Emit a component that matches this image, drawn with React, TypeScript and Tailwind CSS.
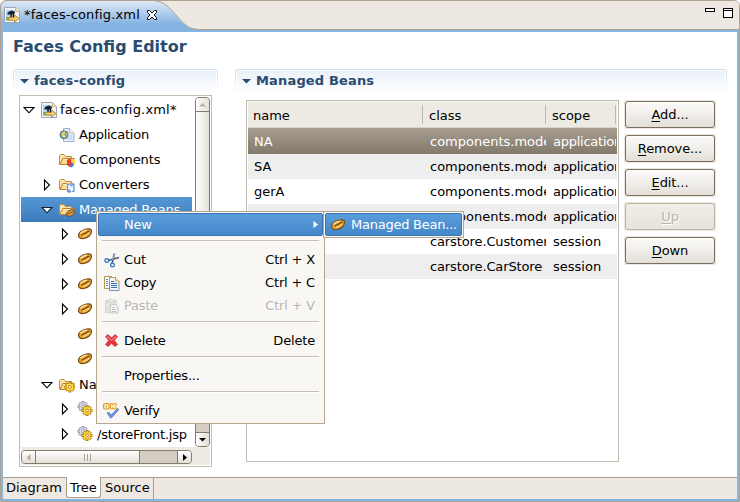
import React from "react";

const Bean = () => (
  <svg width="16" height="16" viewBox="0 0 16 16" className="shrink-0">
    <path d="M1.500 9.500C1.500 6.500 5 4 9.500 3c3-.5 5 .2 5 2.300 0 3.700-3.500 6.600-8 7.200-2.800.3-5-.5-5-3z" fill="#e5a535" stroke="#7a450f" strokeWidth="1.200" />
    <path d="M3.500 7.200C5 5.500 7.500 4.500 10 4.300" stroke="#ffe39a" strokeWidth="1.500" fill="none" />
    <path d="M4.500 9.500C6 7.500 8 8 9.500 6.500s1.500-1 3-1.200" stroke="#7a430d" strokeWidth="1.200" fill="none" />
    <path d="M6 10.500c2.500-.3 4.500-1.500 6.300-3.500" stroke="#fbd069" strokeWidth="1.400" fill="none" />
  </svg>
);

const XmlPage = () => (
  <svg width="16" height="16" viewBox="0 0 16 16" className="shrink-0">
    <path d="M.5.5h11l4 4v11H.5z" fill="#f2f6fb" stroke="#98a6b4" />
    <path d="M11.500.5v4h4" fill="#f4e5b0" stroke="#d9bd74" />
    <rect x="2" y="3" width="9" height="10.500" fill="#b4d4ee" />
    <path d="M2 10h4l3 3.500H2z" fill="#83b168" />
    <path d="M3.500 6 5 4.500 8 3.500 11 5v1.500h-1V10H8.700V7.500h-.9V11H6.300V7.500H3.500z" fill="#17202b" />
    <path d="M4.500 10.500h6V8l4.500 3.500-4.500 3.500v-2h-6z" fill="#f6d27a" stroke="#b88422" strokeWidth=".9" />
  </svg>
);

const AppIcon = () => (
  <svg width="16" height="16" viewBox="0 0 16 16" className="shrink-0">
    <path d="M4.500 1.500h6l4.500 4.500v8.500H4.500z" fill="#e8f0fb" stroke="#a0afcb" />
    <path d="M10.500 1.500V6H15" fill="#fff" stroke="#cdb170" />
    <path d="M10 8h3.500v5H8z" fill="#cadcf5" />
    <circle cx="5" cy="7.800" r="4" fill="#6d9fd2" stroke="#456f9d" />
    <path d="M2.500 6l3-2 1 2-1.500 1.500 2 2L5.500 11 3 9.500zM7.500 5l1 2.500-1 1z" fill="#f1d34d" />
  </svg>
);

const Folder = ({ children }: { children?: React.ReactNode }) => (
  <svg width="16" height="16" viewBox="0 0 16 16" className="shrink-0">
    <path d="M.5 12.500v-9l1-1h3.500l1.500 2h6v2.500" fill="#fae3ae" stroke="#c58d3c" />
    <path d="M1 12.500 3.800 6.500h11.500l-2.800 6z" fill="#fbdc91" stroke="#bd8230" />
    <path d="M4.500 7.500h9" stroke="#fff1c7" />
    {children}
  </svg>
);

const teeth = [0, 45, 90, 135, 180, 225, 270, 315];

const Gear = ({ x, y, gray }: { x: number; y: number; gray?: boolean }) => {
  const edge = gray ? "#8f97ab" : "#b57a0c";
  const body = gray ? "#d3d9e5" : "#ffdc42";
  return (
    <g transform={`translate(${x} ${y})`}>
      {teeth.map((a) => (
        <rect key={a} x="-1" y="-5" width="2" height="3" fill={body} stroke={edge} strokeWidth=".9" transform={`rotate(${a})`} />
      ))}
      <circle r="3.200" fill={body} />
      <circle r="1.500" fill="#fff" stroke={edge} strokeWidth=".9" />
    </g>
  );
};

const Gears = () => (
  <svg width="16" height="16" viewBox="0 0 16 16" className="shrink-0">
    <Gear x={6} y={5.500} gray />
    <Gear x={10} y={9.500} />
  </svg>
);

const icons: Record<string, React.ReactNode> = {
  xml: <XmlPage />,
  app: <AppIcon />,
  comp: (
    <Folder>
      <path d="M8 8l2.500-1.500L13 8v3l-2.500 1.500L8 11z" fill="#ee3b30" />
      <path d="M12 8.500l2-1 2 1V12l-2 1-2-1z" fill="#ffd52e" />
      <path d="M9.500 11.500l2.500-1.500 2.500 1.500v2.500L12 15.500 9.500 14z" fill="#4474da" />
      <path d="M8 10.500l2.500-1 1.500 1.500v2.500l-1.500 1L8 13z" fill="#ee3b30" />
    </Folder>
  ),
  conv: (
    <Folder>
      <path d="M7.500 6.500h8.500v9H7.500z" fill="#eef3fc" />
      <path d="M10.500 14.500h-2v-7h2M13 7.500h2v7h-2M9.500 12.500l2 2-2 1.500M13.500 6l-2 1.500 2 2" stroke="#6f93d2" strokeWidth="1.200" fill="none" />
    </Folder>
  ),
  beans: (
    <Folder>
      <g transform="translate(6.500 6) scale(.62)">
        <path d="M1.500 10.200C1.200 6.600 5 3.600 9.500 2.800c3-.5 5.200.3 5.300 2.500C15 9.300 11 12.800 6.500 13.300c-2.800.3-4.900-.8-5-3.100z" fill="#d9a044" stroke="#6f3d0c" strokeWidth="1.500" />
        <path d="M3.500 10.500C6 7 9 9 13 5" stroke="#6f3d0c" strokeWidth="1.500" fill="none" />
      </g>
    </Folder>
  ),
  nav: (
    <Folder>
      <Gear x={10.800} y={10} />
    </Folder>
  ),
  bean: <Bean />,
  gears: <Gears />,
};

const Expander = ({ open, inverse }: { open: boolean; inverse?: boolean }) => (
  <svg width="12" height="12" viewBox="0 0 12 12" className="shrink-0">
    <path
      d={open ? "M1 3.500h10L6 8.800z" : "M3.500 1v10L8.500 6z"}
      fill="#fff"
      stroke={inverse ? "#10243a" : "#000"}
      strokeWidth="1.100"
    />
  </svg>
);

type Node = { level: number; open?: boolean; icon: string; label: string; tracking?: string; selected?: boolean };

const nodes: Node[] = [
  { level: 0, open: true, icon: "xml", label: "faces-config.xml*", tracking: "tracking-[0.18px]" },
  { level: 1, icon: "app", label: "Application", tracking: "tracking-[-0.25px]" },
  { level: 1, icon: "comp", label: "Components", tracking: "tracking-[-0.08px]" },
  { level: 1, open: false, icon: "conv", label: "Converters", tracking: "tracking-[-0.1px]" },
  { level: 1, open: true, icon: "beans", label: "Managed Beans", tracking: "tracking-[-0.23px]", selected: true },
  { level: 2, open: false, icon: "bean", label: "NA" },
  { level: 2, open: false, icon: "bean", label: "SA" },
  { level: 2, open: false, icon: "bean", label: "gerA" },
  { level: 2, open: false, icon: "bean", label: "" },
  { level: 2, icon: "bean", label: "" },
  { level: 2, icon: "bean", label: "" },
  { level: 1, open: true, icon: "nav", label: "Na" },
  { level: 2, open: false, icon: "gears", label: "" },
  { level: 2, open: false, icon: "gears", label: "/storeFront.jsp", tracking: "tracking-[-0.2px]" },
];

const indents = ["pl-[2px]", "pl-[20px]", "pl-[38px]"];

const TreeRow = ({ node }: { node: Node }) => (
  <div
    className={`flex h-[25px] items-center whitespace-nowrap ${indents[node.level]} ${
      node.selected ? "bg-linear-to-b from-[#5597d5] to-[#3d7cbc] text-white" : ""
    }`}
  >
    <div className={`w-[12px] shrink-0 ${node.level === 2 ? "pb-[2px]" : ""}`}>
      {node.open !== undefined && <Expander open={node.open} inverse={node.selected} />}
    </div>
    <div className={`ml-[6px] ${node.level === 0 ? "mr-[3px]" : "mr-[4px]"} ${node.level === 2 ? "pb-[2px]" : ""}`}>
      {icons[node.icon]}
    </div>
    <span className={node.tracking}>{node.label}</span>
  </div>
);

const SectionHeader = ({ title }: { title: string }) => (
  <div className="h-[25px] rounded-t-[3px] bg-linear-to-b from-[#c9deef] to-white px-px pt-px">
    <div className="flex h-[24px] items-start rounded-t-[2px] border-x border-t border-white bg-linear-to-b from-[#ebf1f9] to-white pl-[5px]">
      <svg width="10" height="6" viewBox="0 0 10 6" className="mr-[4px] mt-[7px]">
        <path d="M0 1h9L4.500 5.500z" fill="#294c70" />
      </svg>
      <h2 className="text-[13px] font-bold leading-[20px] tracking-[0.16px] text-[#294c70]">{title}</h2>
    </div>
  </div>
);

const Arrow = ({ d, color = "#000" }: { d: string; color?: string }) => (
  <svg width="7" height="7" viewBox="0 0 7 7">
    <path d={d} fill={color} />
  </svg>
);

const TreePanel = () => (
  <div className="ml-[6px] mt-[1px] flex h-[372px] w-[193px] flex-col border border-[#c0beb0] bg-white p-px">
    <div className="flex h-[350px]">
      <div className="w-[171px] overflow-hidden">
        {nodes.map((n, i) => (
          <TreeRow key={i} node={n} />
        ))}
      </div>
      <div className="w-[3px] bg-white" />
      <div className="flex flex-1 flex-col overflow-hidden rounded-[4px] border border-[#857b6d] bg-[#d6cdc2]">
        <div className="flex h-[14px] items-center justify-center border-b border-[#857b6d] bg-linear-to-r from-white to-[#e4dfd8]">
          <Arrow d="M0 5.500h7L3.500 2z" color="#b7afa5" />
        </div>
        <div className="h-[300px] border-b border-[#857b6d] bg-linear-to-r from-white to-[#e4dfd8]" />
        <div className="flex-1" />
        <div className="flex h-[14px] items-center justify-center border-t border-[#857b6d] bg-linear-to-r from-white to-[#e4dfd8]">
          <Arrow d="M0 2h7L3.500 5.500z" />
        </div>
      </div>
    </div>
    <div className="flex flex-1 bg-[#eeebe5] pb-px pt-[3px]">
      <div className="flex w-[171px] overflow-hidden rounded-[4px] border border-[#857b6d] bg-[#d6cdc2]">
        <div className="flex w-[14px] items-center justify-center border-r border-[#857b6d] bg-linear-to-b from-white to-[#e4dfd8]">
          <Arrow d="M5.500 0v7L1.500 3.500z" color="#b7afa5" />
        </div>
        <div className="flex w-[104px] items-center justify-center gap-[2px] border-r border-[#857b6d] bg-linear-to-b from-white to-[#e4dfd8]">
          <i className="h-[7px] w-px bg-[#aaa296]" />
          <i className="h-[7px] w-px bg-[#aaa296]" />
          <i className="h-[7px] w-px bg-[#aaa296]" />
        </div>
        <div className="flex-1" />
        <div className="flex w-[14px] items-center justify-center border-l border-[#857b6d] bg-linear-to-b from-white to-[#e4dfd8]">
          <Arrow d="M2 0v7L6 3.500z" />
        </div>
      </div>
    </div>
  </div>
);

const beans = [
  ["NA", "components.model", "application"],
  ["SA", "components.model", "application"],
  ["gerA", "components.model", "application"],
  ["", "components.model", "application"],
  ["", "carstore.Customer", "session"],
  ["", "carstore.CarStore", "session"],
];

const BeanTable = () => (
  <div className="h-[362px] w-[373px] border border-[#c0beb0] bg-white">
    <div className="ml-px mr-px">
      <div className="flex h-[27px] border-b border-t border-b-[#d8d3ca] border-t-[#f6f4f1] bg-[#edeae3] py-[3px] leading-[22px]">
        <div className="w-[175px] border-r border-[#bdb8af] pl-[5px]">name</div>
        <div className="w-[123px] border-r border-[#bdb8af] pl-[6px]">class</div>
        <div className="w-[70px] border-r border-[#bdb8af] pl-[6px]">scope</div>
      </div>
      {beans.map((row, i) => (
        <div
          key={i}
          className={`flex whitespace-nowrap ${
            i === 0
              ? "h-[26px] bg-linear-to-b from-[#a69d90] to-[#847a6c] leading-[27px] text-white"
              : i % 2
                ? "h-[25px] bg-[#eeeeee] leading-[25px]"
                : "h-[25px] leading-[25px]"
          }`}
        >
          <div className="w-[175px] overflow-hidden pl-[6px]">{row[0]}</div>
          <div className={`w-[123px] overflow-hidden pl-[7px] ${i > 3 ? "tracking-[-0.12px]" : ""}`}>{row[1]}</div>
          <div className={`w-[70px] overflow-hidden pl-[7px] ${i > 3 ? "" : "tracking-[-0.25px]"}`}>{row[2]}</div>
        </div>
      ))}
    </div>
  </div>
);

const SideButton = ({ hot, rest, disabled }: { hot: string; rest: string; disabled?: boolean }) => (
  <div className="h-[29px] rounded-[2px] bg-[#ece8df] p-px">
    <button
      disabled={disabled}
      className={`block h-[27px] w-full rounded-[3px] border bg-linear-to-b text-center leading-[24px] tracking-[-0.1px] ${
        disabled
          ? "border-[#beb3a0] from-[#f0ede7] to-[#e8e3dc] text-[#bab5ac] [text-shadow:1px_1px_0_#fff]"
          : "border-[#7b705f] from-[#fbfaf9] via-[#f0eeea] to-[#e3dfd8] text-black shadow-[inset_0_1px_0_#fff]"
      }`}
    >
      <span className="underline underline-offset-2">{hot}</span>
      {rest}
    </button>
  </div>
);

const Cut = () => (
  <svg width="16" height="16" viewBox="0 0 16 16">
    <path d="M10.500 1.500 8 11.500M15 5.500 4 8.500" stroke="#465a7c" strokeWidth="1.600" />
    <path d="M11.200 2 8.500 8" stroke="#a9bdd7" />
    <circle cx="2.800" cy="8.500" r="1.900" fill="#e4f1fd" stroke="#2d75b5" strokeWidth="1.200" />
    <circle cx="8.500" cy="13" r="1.900" fill="#e4f1fd" stroke="#2d75b5" strokeWidth="1.200" />
  </svg>
);

const Copy = () => (
  <svg width="16" height="16" viewBox="0 0 16 16">
    <path d="M.5 1.500h7l2 2v10h-9z" fill="#f4f8ff" stroke="#b69d55" />
    <path d="M2 4.500h2M2 6.500h2M2 8.500h2M2 10.500h2" stroke="#6288bd" />
    <path d="M5.500 2.500h6l3.500 3.500v9.500H5.500z" fill="#eef5ff" stroke="#8090a3" />
    <path d="M5.500 7V2.500h6L15 6" fill="none" stroke="#c1a347" />
    <path d="M11.500 2.500V6H15" fill="#fff2b6" stroke="#c1a347" />
    <path d="M7 6.500h3M7 8.500h6M7 10.500h6M7 12.500h6" stroke="#3d69a8" />
  </svg>
);

const Paste = () => (
  <svg width="16" height="16" viewBox="0 0 16 16">
    <path d="M1.500 2.500h11v12h-11z" fill="#e4e2de" stroke="#d8d6d2" />
    <path d="M4 4V2h2l1-1.500L8.500 2h2v2z" fill="#f3f2ef" stroke="#cfcdc9" />
    <path d="M6.500 6.500h5l2.500 2.500v6H6.500z" fill="#f5f4f2" stroke="#c8c6c2" />
    <path d="M8 9.500h3M8 11.500h4M8 13.500h4" stroke="#c8c6c2" />
  </svg>
);

const Delete = () => (
  <svg width="16" height="16" viewBox="0 0 16 16">
    <path d="M1.500 3.500 4 1.500 7.500 5 11 1.500 13.500 3.500 10.300 7.500 13.500 11.500 11 13.500 7.500 10.300 4 13.500 1.500 11.500 4.700 7.500z" fill="#e92c3c" stroke="#cf5358" />
    <path d="M3 3.500 7.500 7.500 12 3.500" stroke="#f47e80" strokeWidth="1.200" fill="none" />
  </svg>
);

const Verify = () => (
  <svg width="16" height="16" viewBox="0 0 16 16" className="-ml-px">
    <rect x=".6" y=".6" width="5.400" height="5.400" rx="1.200" fill="#fff0bc" stroke="#dc9c30" strokeWidth="1.100" />
    <path d="M3.300 2.200v2.300" stroke="#dc9c30" />
    <path d="M7.500.6h2.200v1.500L11 .6h2.200v1.700l-1 1 1 1V6H11L9.700 4.500V6H7.500z" fill="#fff0bc" stroke="#dc9c30" />
    <path d="M4 9.800 6 9.200l2 2.800 6.500-6.500L16 6.500 8.500 15H7.300z" fill="#6c91df" stroke="#5377c3" strokeWidth=".6" />
  </svg>
);

const MenuItem = ({
  icon,
  label,
  keys,
  disabled,
}: {
  icon?: React.ReactNode;
  label: string;
  keys?: string;
  disabled?: boolean;
}) => (
  <div className={`flex h-[23px] items-center pl-[6px] pr-[8px] tracking-[-0.18px] ${disabled ? "text-[#b8b5af] [text-shadow:1px_1px_0_#fff]" : ""}`}>
    <div className="mr-[4px] w-[16px]">{icon}</div>
    <span className="flex-1">{label}</span>
    <span>{keys}</span>
  </div>
);

const Separator = () => <div className="mx-[4px] mb-[6px] mt-[4px] h-[2px] border-b border-t border-b-white border-t-[#c4c0b9]" />;

const ContextMenu = () => (
  <div className="absolute left-[96px] top-[211px] h-[213px] w-[229px] border border-[#b3a78f] bg-[#f8f7f4] p-px">
    <div className="flex h-[23px] items-center justify-between rounded-[2px] border border-[#3b76b2] bg-linear-to-b from-[#5a9cdb] to-[#4488ca] pl-[25px] pr-[3px] text-white">
      <span className="tracking-[-0.2px]">New</span>
      <Arrow d="M1.500 0v7L6 3.500z" color="#fff" />
    </div>
    <Separator />
    <MenuItem icon={<Cut />} label="Cut" keys="Ctrl + X" />
    <MenuItem icon={<Copy />} label="Copy" keys="Ctrl + C" />
    <MenuItem icon={<Paste />} label="Paste" keys="Ctrl + V" disabled />
    <Separator />
    <MenuItem icon={<Delete />} label="Delete" keys="Delete" />
    <Separator />
    <MenuItem label="Properties..." />
    <Separator />
    <MenuItem icon={<Verify />} label="Verify" />
  </div>
);

const Submenu = () => (
  <div className="absolute left-[323px] top-[211px] h-[27px] w-[141px] border border-[#b3a78f] bg-[#f8f7f4] p-px">
    <div className="flex h-[23px] items-center gap-[5px] rounded-[2px] border border-[#3b76b2] bg-linear-to-b from-[#5a9cdb] to-[#4488ca] pl-[4px] text-white">
      <Bean />
      <span className="whitespace-nowrap tracking-[-0.24px]">Managed Bean...</span>
    </div>
  </div>
);

const TopBar = () => (
  <header className="flex h-[30px] shrink-0 border-b border-[#b0a08f] bg-[#ede9e2]">
    <div className="relative -mb-px h-[30px] w-[196px]">
      <svg width="196" height="31" viewBox="0 0 196 31" className="absolute inset-0">
        <defs>
          <linearGradient id="tab" x1="0" y1="0" x2="0" y2="1">
            <stop offset="0" stopColor="#dfe9f7" />
            <stop offset=".75" stopColor="#86b4e2" />
            <stop offset="1" stopColor="#83b3e1" />
          </linearGradient>
        </defs>
        <path d="M0 31V5L4 1h146c10 0 15 4 20 9l10 11c5 5 8 8 16 8v2z" fill="url(#tab)" />
        <path d="M0 5.500Q1 1 5 .5h145c10 0 15 4 20 9l10 11c5 5 8 8 16 8.800" fill="none" stroke="#b0a08f" />
      </svg>
      <div className="relative flex h-[30px] items-center pl-[3px]">
        <XmlPage />
        <span className="ml-[4px] tracking-[0.14px]">*faces-config.xml</span>
        <svg width="12" height="12" viewBox="0 0 12 12" className="ml-[6px]">
          <path d="M1.500 1.500h2L6 4l2.500-2.500h2v2L8 6l2.500 2.500v2h-2L6 8l-2.500 2.500h-2v-2L4 6 1.500 3.500z" fill="#fff" stroke="#111" />
        </svg>
      </div>
    </div>
    <div className="flex flex-1 items-start justify-end gap-[8px] pr-[6px] pt-[8px]">
      <div className="h-[4px] w-[10px] border border-black bg-white" />
      <div className="h-[10px] w-[10px] border border-black bg-white pt-px">
        <div className="h-px bg-black" />
      </div>
    </div>
  </header>
);

export default function App() {
  return (
    <div className="relative flex h-[502px] w-[740px] flex-col overflow-hidden rounded-tl-[6px] rounded-tr-[6px] border border-[#b0a08f] bg-white font-['DejaVu_Sans',sans-serif] text-[13px] leading-[20px] text-black">
      <div className="-mt-px flex flex-1 flex-col">
        <TopBar />
        <div className="flex flex-1 flex-col border-2 border-[#85b5e1]">
          <h1 className="h-[37px] pl-[10px] pt-[5px] text-[16px] font-bold leading-[20px] text-[#294c70]">Faces Config Editor</h1>
          <main className="flex h-[408px] pl-[10px]">
            <section className="w-[205px]">
              <SectionHeader title="faces-config" />
              <TreePanel />
            </section>
            <section className="ml-[17px] w-[492px]">
              <SectionHeader title="Managed Beans" />
              <div className="flex pl-[11px] pt-[6px]">
                <BeanTable />
                <div className="ml-[5px] flex w-[92px] flex-col gap-[5px]">
                  <SideButton hot="A" rest="dd..." />
                  <SideButton hot="R" rest="emove..." />
                  <SideButton hot="E" rest="dit..." />
                  <SideButton hot="U" rest="p" disabled />
                  <SideButton hot="D" rest="own" />
                </div>
              </div>
            </section>
          </main>
          <footer className="flex flex-1 border-t border-[#a99d8e] bg-[#ede9e2]">
            <div className="w-[63px] pl-[3px]">Diagram</div>
            <div className="-mt-px h-[21px] w-[35px] rounded-b-[3px] border-x border-b border-[#a99d8e] bg-white pl-[3px] pt-px tracking-[-0.15px]">Tree</div>
            <div className="w-[53px] border-r border-[#a99d8e] pl-[4px]">Source</div>
          </footer>
        </div>
      </div>
      <div className="pointer-events-none absolute -left-px -top-px">
        <ContextMenu />
        <Submenu />
      </div>
    </div>
  );
}
